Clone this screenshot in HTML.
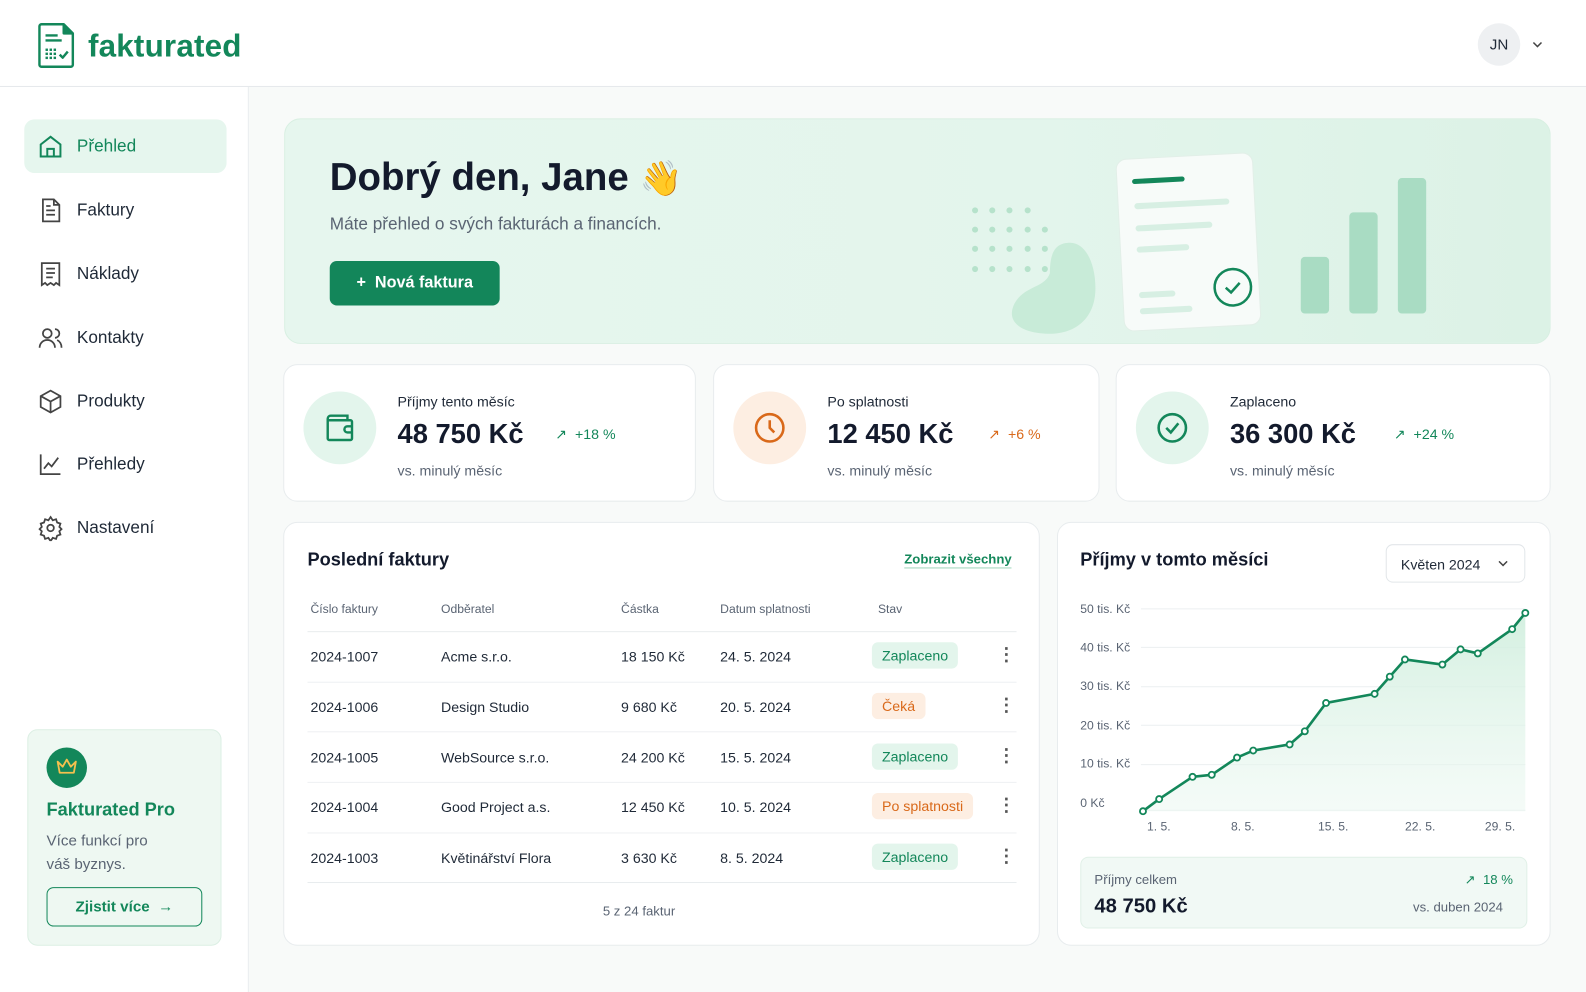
<!DOCTYPE html>
<html><head><meta charset="utf-8">
<style>
*{box-sizing:border-box;margin:0;padding:0}
html,body{width:1586px;height:992px;overflow:hidden;background:#f8faf9}
body{font-family:"Liberation Sans",sans-serif;color:#1a2233;position:relative}
#w{position:absolute;left:0;top:0;width:1568px;height:981px;transform:scale(1.01148);transform-origin:0 0}
.abs{position:absolute}
.header{left:0;top:0;width:1568px;height:86px;background:#fff;border-bottom:1px solid #e6e9ec}
.side{left:0;top:86px;width:246px;height:906px;background:#fff;border-right:1px solid #e9ecee}
.nav{left:24px;width:200px;height:53px;border-radius:10px;display:flex;align-items:center;font-size:17px;color:#1f2937}
.nav svg{position:absolute;left:13px}
.nav span{position:absolute;left:52px}
.card{background:#fff;border:1px solid #e8ecee;border-radius:14px}
.g{color:#13875a}
.th{font-size:12px;color:#5a6473}
.td{font-size:14px;color:#1f2937}
.badge{font-size:14px;padding:5px 10px;border-radius:6px}
.ok{background:#e3f5ec;color:#13875a}
.wait{background:#fdeee2;color:#d9691a}
.dots{font-size:18px;color:#555;font-weight:bold}
.ylab{font-size:12px;color:#5a6473}
</style></head><body><div id="w">

<div class="abs header"></div>
<svg class="abs" style="left:37px;top:22px" width="38" height="46" viewBox="0 0 38 46" fill="none" stroke="#13875a" stroke-width="2.4" stroke-linejoin="round">
<path d="M4 2h22l9 9v31a2 2 0 0 1-2 2H4a2 2 0 0 1-2-2V4a2 2 0 0 1 2-2z"/><path d="M26 2v9h9" fill="#13875a"/>
<path d="M8 13h12M8 18h16"/>
<g fill="#13875a" stroke="none"><rect x="8" y="26" width="2.4" height="2.4"/><rect x="12" y="26" width="2.4" height="2.4"/><rect x="16" y="26" width="2.4" height="2.4"/><rect x="8" y="30" width="2.4" height="2.4"/><rect x="12" y="30" width="2.4" height="2.4"/><rect x="16" y="30" width="2.4" height="2.4"/><rect x="8" y="34" width="2.4" height="2.4"/><rect x="12" y="34" width="2.4" height="2.4"/><rect x="16" y="34" width="2.4" height="2.4"/></g>
<path d="M22 32l3 3 5-6"/></svg>
<div class="abs g" style="left:87px;top:28px;font-size:31px;font-weight:bold;letter-spacing:0.2px">fakturated</div>
<div class="abs" style="left:1461px;top:23px;width:42px;height:42px;border-radius:50%;background:#eef0f2;font-size:15px;display:flex;align-items:center;justify-content:center;color:#1f2937">JN</div>
<svg class="abs" style="left:1514px;top:39px" width="12" height="10"><path d="M2 3l4 4 4-4" stroke="#444" stroke-width="1.5" fill="none"/></svg>

<div class="abs side"></div>
<div class="abs nav" style="top:118px;background:#e6f6ee;color:#13875a"><svg width="26" height="26" viewBox="0 0 24 24" fill="none" stroke="#13875a" stroke-width="1.8"><path d="M3 10l9-7 9 7v11H3z"/><path d="M9 21v-7h6v7"/></svg><span>Přehled</span></div>
<div class="abs nav" style="top:181px"><svg width="26" height="26" viewBox="0 0 24 24" fill="none" stroke="#444" stroke-width="1.6"><path d="M5 2h10l5 5v15H5z"/><path d="M15 2v5h5M8 12h8M8 16h8M8 8h4"/></svg><span>Faktury</span></div>
<div class="abs nav" style="top:244px"><svg width="26" height="26" viewBox="0 0 24 24" fill="none" stroke="#444" stroke-width="1.6"><path d="M4 2h16v20l-3-2-2 2-3-2-3 2-2-2-3 2z"/><path d="M8 7h8M8 11h8M8 15h6"/></svg><span>Náklady</span></div>
<div class="abs nav" style="top:307px"><svg width="26" height="26" viewBox="0 0 24 24" fill="none" stroke="#444" stroke-width="1.6"><circle cx="9" cy="8" r="4"/><path d="M2 21c0-4 3-7 7-7s7 3 7 7"/><path d="M16 4a4 4 0 0 1 0 8M18 14c2 1 4 3 4 7"/></svg><span>Kontakty</span></div>
<div class="abs nav" style="top:370px"><svg width="26" height="26" viewBox="0 0 24 24" fill="none" stroke="#444" stroke-width="1.6"><path d="M12 2l9 5v10l-9 5-9-5V7z"/><path d="M3 7l9 5 9-5M12 12v10"/></svg><span>Produkty</span></div>
<div class="abs nav" style="top:432px"><svg width="26" height="26" viewBox="0 0 24 24" fill="none" stroke="#444" stroke-width="1.6"><path d="M3 3v18h18"/><path d="M6 16l4-5 3 3 6-8"/></svg><span>Přehledy</span></div>
<div class="abs nav" style="top:495px"><svg width="26" height="26" viewBox="0 0 24 24" fill="none" stroke="#444" stroke-width="1.6"><circle cx="12" cy="12" r="3"/><path d="M12 2l2 3 3-1 1 3 3 1-1 3 2 2-2 2 1 3-3 1-1 3-3-1-2 3-2-3-3 1-1-3-3-1 1-3-2-2 2-2-1-3 3-1 1-3 3 1z"/></svg><span>Nastavení</span></div>

<div class="abs" style="left:27px;top:721px;width:192px;height:214px;background:#eef8f2;border:1px solid #dcefe4;border-radius:10px"></div>
<div class="abs" style="left:46px;top:739px;width:40px;height:40px;border-radius:50%;background:#13875a"></div>
<svg class="abs" style="left:55px;top:749px" width="22" height="18" viewBox="0 0 22 18" fill="none" stroke="#f4c04e" stroke-width="1.8" stroke-linejoin="round"><path d="M2 4l5 5 4-7 4 7 5-5-2 11H4z"/></svg>
<div class="abs g" style="left:46px;top:790px;font-size:18px;font-weight:bold">Fakturated Pro</div>
<div class="abs" style="left:46px;top:820px;font-size:15px;color:#5a6473;line-height:23px">Více funkcí pro<br>váš byznys.</div>
<div class="abs g" style="left:46px;top:877px;width:154px;height:39px;border:1.5px solid #13875a;border-radius:7px;font-size:15px;font-weight:bold;display:flex;align-items:center;justify-content:center">Zjistit více &nbsp;→</div>

<div class="abs" style="left:281px;top:117px;width:1252px;height:223px;border-radius:16px;background:linear-gradient(90deg,#e6f6ee 0%,#e3f5ec 60%,#dcf2e6 100%);border:1px solid #d8efe2"></div>
<div class="abs" style="left:326px;top:155px;font-size:38px;font-weight:bold;color:#131a2c">Dobrý den, Jane <span style="font-size:34px">👋</span></div>
<div class="abs" style="left:326px;top:212px;font-size:17px;color:#5a6473">Máte přehled o svých fakturách a financích.</div>
<div class="abs" style="left:326px;top:258px;width:168px;height:44px;background:#13865a;border-radius:7px;color:#fff;font-size:16px;font-weight:bold;display:flex;align-items:center;justify-content:center">+&nbsp; Nová faktura</div>
<svg class="abs" style="left:940px;top:140px" width="500" height="200">
<g fill="#b6e2cb">
<circle cx="24" cy="68" r="3"/><circle cx="41" cy="68" r="3"/><circle cx="58" cy="68" r="3"/><circle cx="76" cy="68" r="3"/>
<circle cx="24" cy="87" r="3"/><circle cx="41" cy="87" r="3"/><circle cx="58" cy="87" r="3"/><circle cx="76" cy="87" r="3"/><circle cx="93" cy="87" r="3"/>
<circle cx="24" cy="106" r="3"/><circle cx="41" cy="106" r="3"/><circle cx="58" cy="106" r="3"/><circle cx="76" cy="106" r="3"/><circle cx="93" cy="106" r="3"/>
<circle cx="24" cy="126" r="3"/><circle cx="41" cy="126" r="3"/><circle cx="58" cy="126" r="3"/><circle cx="76" cy="126" r="3"/><circle cx="93" cy="126" r="3"/></g>
<path d="M118 100c15 0 25 20 25 45 0 30-20 45-45 45s-45-10-35-30c10-18 30-15 35-30 0-20 5-30 20-30z" fill="#c8ebd8"/>
<rect x="346" y="114" width="28" height="56" rx="4" fill="#a9dcc3"/>
<rect x="394" y="70" width="28" height="100" rx="4" fill="#a9dcc3"/>
<rect x="442" y="36" width="28" height="134" rx="4" fill="#a9dcc3"/>
<g transform="rotate(-3 240 110)"><rect x="168" y="14" width="135" height="170" rx="10" fill="#f7fbf9" stroke="#e2efe8"/>
<rect x="183" y="34" width="52" height="5" rx="2.5" fill="#13875a"/>
<rect x="184" y="58" width="94" height="6" rx="3" fill="#d7efe3"/><rect x="184" y="80" width="76" height="6" rx="3" fill="#d7efe3"/><rect x="184" y="101" width="52" height="6" rx="3" fill="#d7efe3"/>
<rect x="184" y="146" width="36" height="6" rx="3" fill="#d7efe3"/><rect x="184" y="162" width="52" height="6" rx="3" fill="#d7efe3"/>
<circle cx="277" cy="146" r="18" fill="none" stroke="#13875a" stroke-width="2.5"/><path d="M270 146l5 5 9-9" fill="none" stroke="#13875a" stroke-width="2.5"/></g>
</svg>

<div class="abs card" style="left:280px;top:360px;width:408px;height:136px"></div>
<div class="abs card" style="left:705px;top:360px;width:382px;height:136px"></div>
<div class="abs card" style="left:1103px;top:360px;width:430px;height:136px"></div>
<div class="abs" style="left:300px;top:387px;width:72px;height:72px;border-radius:50%;background:#e3f5ec"></div>
<svg class="abs" style="left:318px;top:405px" width="36" height="36" viewBox="0 0 24 24" fill="none" stroke="#13875a" stroke-width="1.6"><path d="M4 7h15a1 1 0 0 1 1 1v11a1 1 0 0 1-1 1H5a1 1 0 0 1-1-1V6a2 2 0 0 1 2-2h11v3"/><path d="M20 11h-3a2 2 0 0 0 0 4h3"/></svg>
<div class="abs" style="left:725px;top:387px;width:72px;height:72px;border-radius:50%;background:#fdeee2"></div>
<svg class="abs" style="left:743px;top:405px" width="36" height="36" viewBox="0 0 24 24" fill="none" stroke="#d9691a" stroke-width="1.7"><circle cx="12" cy="12" r="9"/><path d="M12 7v5l3 3"/></svg>
<div class="abs" style="left:1123px;top:387px;width:72px;height:72px;border-radius:50%;background:#e3f5ec"></div>
<svg class="abs" style="left:1141px;top:405px" width="36" height="36" viewBox="0 0 24 24" fill="none" stroke="#13875a" stroke-width="1.7"><circle cx="12" cy="12" r="9"/><path d="M8 12l3 3 5-6"/></svg>

<div class="abs" style="left:393px;top:389px;font-size:14px;color:#1f2937">Příjmy tento měsíc</div>
<div class="abs" style="left:393px;top:414px;font-size:27px;font-weight:bold;color:#131a2c">48 750 Kč</div>
<div class="abs g" style="left:549px;top:421px;font-size:14px">↗ &nbsp;+18 %</div>
<div class="abs" style="left:393px;top:457px;font-size:14px;color:#5a6473">vs. minulý měsíc</div>

<div class="abs" style="left:818px;top:389px;font-size:14px;color:#1f2937">Po splatnosti</div>
<div class="abs" style="left:818px;top:414px;font-size:27px;font-weight:bold;color:#131a2c">12 450 Kč</div>
<div class="abs" style="left:977px;top:421px;font-size:14px;color:#d9691a">↗ &nbsp;+6 %</div>
<div class="abs" style="left:818px;top:457px;font-size:14px;color:#5a6473">vs. minulý měsíc</div>

<div class="abs" style="left:1216px;top:389px;font-size:14px;color:#1f2937">Zaplaceno</div>
<div class="abs" style="left:1216px;top:414px;font-size:27px;font-weight:bold;color:#131a2c">36 300 Kč</div>
<div class="abs g" style="left:1378px;top:421px;font-size:14px">↗ &nbsp;+24 %</div>
<div class="abs" style="left:1216px;top:457px;font-size:14px;color:#5a6473">vs. minulý měsíc</div>

<div class="abs card" style="left:280px;top:516px;width:748px;height:419px"></div>
<div class="abs" style="left:304px;top:543px;font-size:18px;font-weight:bold;color:#131a2c">Poslední faktury</div>
<div class="abs g" style="left:894px;top:545px;font-size:13px;font-weight:bold;border-bottom:1px solid #9fd6bb;padding-bottom:1px">Zobrazit všechny</div>
<div class="abs th" style="left:307px;top:595px">Číslo faktury</div>
<div class="abs th" style="left:436px;top:595px">Odběratel</div>
<div class="abs th" style="left:614px;top:595px">Částka</div>
<div class="abs th" style="left:712px;top:595px">Datum splatnosti</div>
<div class="abs th" style="left:868px;top:595px">Stav</div>

<div class="abs" style="left:304px;top:624px;width:701px;height:1px;background:#e8ecee"></div>
<div class="abs td" style="left:307px;top:641px">2024-1007</div><div class="abs td" style="left:436px;top:641px">Acme s.r.o.</div><div class="abs td" style="left:614px;top:641px">18 150 Kč</div><div class="abs td" style="left:712px;top:641px">24. 5. 2024</div><div class="abs badge ok" style="left:862px;top:635px">Zaplaceno</div><div class="abs dots" style="left:986px;top:637px">⋮</div>
<div class="abs" style="left:304px;top:674px;width:701px;height:1px;background:#eef0f2"></div>
<div class="abs td" style="left:307px;top:691px">2024-1006</div><div class="abs td" style="left:436px;top:691px">Design Studio</div><div class="abs td" style="left:614px;top:691px">9 680 Kč</div><div class="abs td" style="left:712px;top:691px">20. 5. 2024</div><div class="abs badge wait" style="left:862px;top:685px">Čeká</div><div class="abs dots" style="left:986px;top:687px">⋮</div>
<div class="abs" style="left:304px;top:723px;width:701px;height:1px;background:#eef0f2"></div>
<div class="abs td" style="left:307px;top:741px">2024-1005</div><div class="abs td" style="left:436px;top:741px">WebSource s.r.o.</div><div class="abs td" style="left:614px;top:741px">24 200 Kč</div><div class="abs td" style="left:712px;top:741px">15. 5. 2024</div><div class="abs badge ok" style="left:862px;top:735px">Zaplaceno</div><div class="abs dots" style="left:986px;top:737px">⋮</div>
<div class="abs" style="left:304px;top:773px;width:701px;height:1px;background:#eef0f2"></div>
<div class="abs td" style="left:307px;top:790px">2024-1004</div><div class="abs td" style="left:436px;top:790px">Good Project a.s.</div><div class="abs td" style="left:614px;top:790px">12 450 Kč</div><div class="abs td" style="left:712px;top:790px">10. 5. 2024</div><div class="abs badge wait" style="left:862px;top:784px">Po splatnosti</div><div class="abs dots" style="left:986px;top:786px">⋮</div>
<div class="abs" style="left:304px;top:823px;width:701px;height:1px;background:#eef0f2"></div>
<div class="abs td" style="left:307px;top:840px">2024-1003</div><div class="abs td" style="left:436px;top:840px">Květinářství Flora</div><div class="abs td" style="left:614px;top:840px">3 630 Kč</div><div class="abs td" style="left:712px;top:840px">8. 5. 2024</div><div class="abs badge ok" style="left:862px;top:834px">Zaplaceno</div><div class="abs dots" style="left:986px;top:836px">⋮</div>
<div class="abs" style="left:304px;top:872px;width:701px;height:1px;background:#e8ecee"></div>
<div class="abs" style="left:596px;top:893px;font-size:13px;color:#5a6473">5 z 24 faktur</div>

<div class="abs card" style="left:1045px;top:516px;width:488px;height:419px"></div>
<div class="abs" style="left:1068px;top:543px;font-size:18px;font-weight:bold;color:#131a2c">Příjmy v tomto měsíci</div>
<div class="abs" style="left:1370px;top:538px;width:138px;height:38px;border:1px solid #e2e6e9;border-radius:7px;font-size:14px;padding:11px 0 0 14px;color:#1f2937">Květen 2024</div>
<svg class="abs" style="left:1480px;top:552px" width="12" height="10"><path d="M2 3l4 4 4-4" stroke="#444" stroke-width="1.5" fill="none"/></svg>
<div class="abs ylab" style="left:1068px;top:595px">50 tis. Kč</div>
<div class="abs ylab" style="left:1068px;top:633px">40 tis. Kč</div>
<div class="abs ylab" style="left:1068px;top:671px">30 tis. Kč</div>
<div class="abs ylab" style="left:1068px;top:710px">20 tis. Kč</div>
<div class="abs ylab" style="left:1068px;top:748px">10 tis. Kč</div>
<div class="abs ylab" style="left:1068px;top:787px">0 Kč</div>
<div class="abs ylab" style="left:1134px;top:810px">1. 5.</div>
<div class="abs ylab" style="left:1217px;top:810px">8. 5.</div>
<div class="abs ylab" style="left:1303px;top:810px">15. 5.</div>
<div class="abs ylab" style="left:1389px;top:810px">22. 5.</div>
<div class="abs ylab" style="left:1468px;top:810px">29. 5.</div>
<svg class="abs" style="left:0;top:0" width="1586" height="992">
<defs><linearGradient id="ag" x1="0" y1="0" x2="0" y2="1"><stop offset="0" stop-color="#cfeedd" stop-opacity=".9"/><stop offset="1" stop-color="#eaf7f0" stop-opacity=".5"/></linearGradient></defs>
<g stroke="#eceff1" stroke-width="1"><path d="M1128 602H1508M1128 640H1508M1128 679H1508M1128 717H1508M1128 756H1508M1128 801H1508"/></g>
<path d="M1130 802L1146 790L1179 768L1198 766L1223 749L1239 742L1275 736L1290 723L1311 695L1359 686L1374 669L1389 652L1426 657L1444 642L1461 646L1495 622L1508 606L1508 802Z" fill="url(#ag)"/>
<path d="M1130 802L1146 790L1179 768L1198 766L1223 749L1239 742L1275 736L1290 723L1311 695L1359 686L1374 669L1389 652L1426 657L1444 642L1461 646L1495 622L1508 606" fill="none" stroke="#13875a" stroke-width="2.6" stroke-linejoin="round"/>
<g fill="#fff" stroke="#13875a" stroke-width="1.8">
<circle cx="1130" cy="802" r="3"/><circle cx="1146" cy="790" r="3"/><circle cx="1179" cy="768" r="3"/><circle cx="1198" cy="766" r="3"/><circle cx="1223" cy="749" r="3"/><circle cx="1239" cy="742" r="3"/><circle cx="1275" cy="736" r="3"/><circle cx="1290" cy="723" r="3"/><circle cx="1311" cy="695" r="3"/><circle cx="1359" cy="686" r="3"/><circle cx="1374" cy="669" r="3"/><circle cx="1389" cy="652" r="3"/><circle cx="1426" cy="657" r="3"/><circle cx="1444" cy="642" r="3"/><circle cx="1461" cy="646" r="3"/><circle cx="1495" cy="622" r="3"/><circle cx="1508" cy="606" r="3"/></g>
</svg>
<div class="abs" style="left:1068px;top:847px;width:442px;height:71px;background:#f1f9f5;border:1px solid #e0f0e7;border-radius:8px"></div>
<div class="abs" style="left:1082px;top:862px;font-size:13px;color:#5a6473">Příjmy celkem</div>
<div class="abs" style="left:1082px;top:885px;font-size:20px;font-weight:bold;color:#131a2c">48 750 Kč</div>
<div class="abs g" style="left:1448px;top:862px;font-size:13px">↗ &nbsp;18 %</div>
<div class="abs" style="left:1397px;top:889px;font-size:13px;color:#5a6473">vs. duben 2024</div>
</div></body></html>
